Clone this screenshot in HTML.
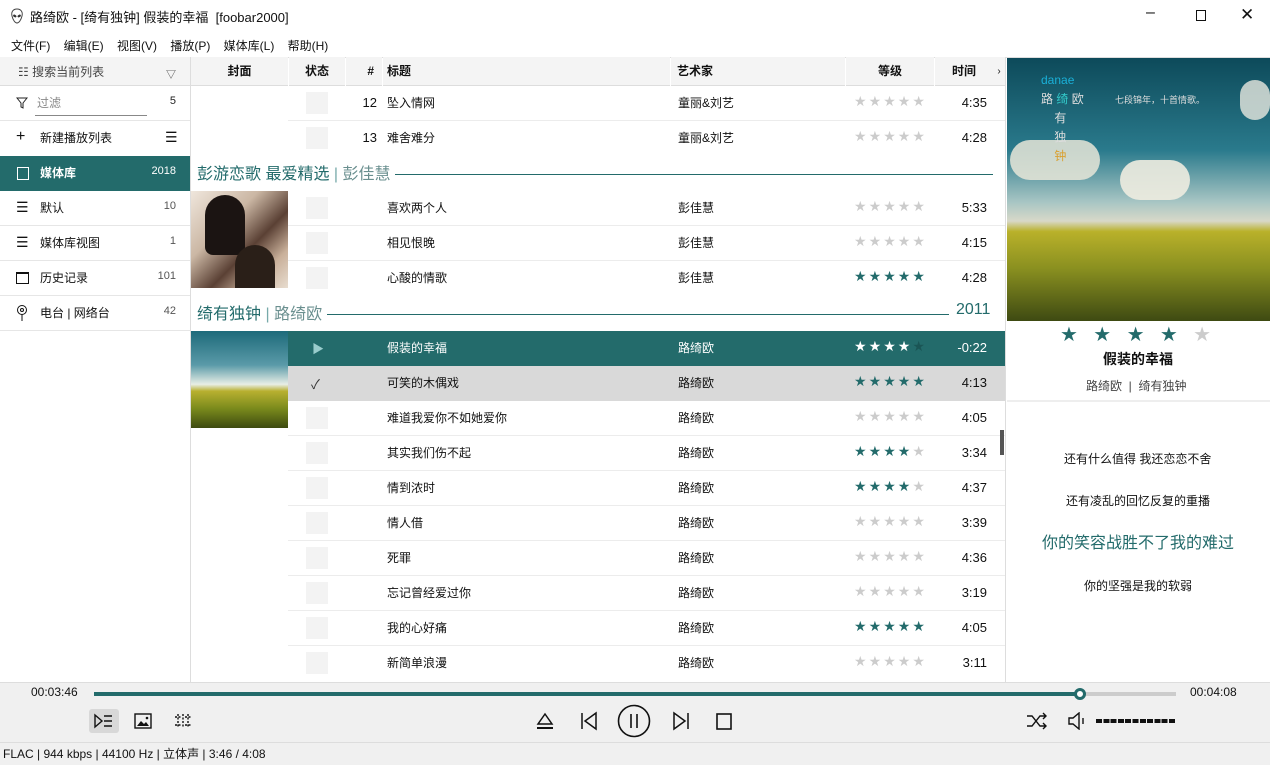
<!DOCTYPE html>
<html><head><meta charset="utf-8">
<style>
*{margin:0;padding:0;box-sizing:border-box}
body{width:1270px;height:765px;overflow:hidden;background:#fff;font-family:"Liberation Sans","Noto Sans CJK SC",sans-serif;font-size:12px;color:#111;position:relative}
.a{position:absolute}
.t{position:absolute;white-space:nowrap}
.row{position:absolute;left:288px;width:717px;height:35px;border-bottom:1px solid #ececec}
.sq{position:absolute;left:18px;top:6px;width:22px;height:22px;background:#f3f3f3}
.num{position:absolute;right:628px;top:9px;font-size:13px}
.ti{position:absolute;left:99px;top:8px}
.ar{position:absolute;left:390px;top:8px}
.st{position:absolute;left:565px;top:7px;font-size:14px;color:#ccc;letter-spacing:0}
.st span{display:inline-block;width:14.6px;text-align:center;font-family:"DejaVu Sans",sans-serif}
.g{color:#236b6b}
.tm{position:absolute;right:18px;top:9px;font-size:13px}
.side{position:absolute;left:0;width:190px;height:35px;border-bottom:1px solid #e6e6e6}
.side .l{position:absolute;left:40px;top:8px;font-size:12px}
.side .n{position:absolute;right:14px;top:9px;font-size:11px;color:#555}
.side .ic{position:absolute;left:16px;top:11px}
.hd{position:absolute;top:57px;height:29px;background:#f4f4f4;border-bottom:1px solid #ddd;font-weight:bold;font-size:12px;line-height:29px}
</style></head><body>
<div class="a" style="left:0;top:0;width:1270px;height:32px;background:#fff"></div>
<svg class="a" style="left:9px;top:8px" width="16" height="16" viewBox="0 0 16 16"><path d="M8 1C4 1 2 4 3 8c1 4 3 7 5 7s4-3 5-7c1-4-1-7-5-7z" fill="#fff" stroke="#444"/><ellipse cx="5.8" cy="8" rx="1.8" ry="1.2" fill="#333" transform="rotate(30 5.8 8)"/><ellipse cx="10.2" cy="8" rx="1.8" ry="1.2" fill="#333" transform="rotate(-30 10.2 8)"/></svg>
<div class="t" style="left:30px;top:7px;font-size:13px">路绮欧 - [绮有独钟] 假装的幸福 &nbsp;[foobar2000]</div>
<div class="t" style="left:1146px;top:4px;font-size:16px">–</div>
<div class="a" style="left:1196px;top:10px;width:10px;height:11px;border:1px solid #111"></div>
<div class="t" style="left:1240px;top:5px;font-size:17px;font-weight:300">✕</div>
<div class="t" style="left:11px;top:37px;font-size:12px;word-spacing:10px">文件(F) 编辑(E) 视图(V) 播放(P) 媒体库(L) 帮助(H)</div>
<div class="a" style="left:0;top:57px;width:1270px;height:1px;background:#ddd"></div>
<div class="a" style="left:0;top:57px;width:190px;height:29px;background:#f4f4f4;border-bottom:1px solid #ddd"></div>
<div class="t" style="left:18px;top:63px;font-size:12px;color:#444">☷ 搜索当前列表</div>
<div class="t" style="left:166px;top:66px;font-size:10px;color:#444">▽</div>
<div class="a" style="left:190px;top:57px;width:1px;height:625px;background:#ddd"></div>
<div class="side" style="top:86px"><svg class="ic" width="12" height="12" viewBox="0 0 12 12" style="top:11px"><path d="M1 1h10L7 6v5L5 10V6z" fill="none" stroke="#222"/></svg><span class="l" style="left:37px;top:8px;color:#888">过滤</span><div class="a" style="left:35px;top:29px;width:112px;height:1px;background:#888"></div><span class="n" style="color:#222">5</span></div>
<div class="side" style="top:121px;border:none"><span class="t" style="left:16px;top:7px;font-size:16px">+</span><span class="l">新建播放列表</span><span class="t" style="left:165px;top:8px;font-size:14px">☰</span></div>
<div class="side" style="top:156px;background:#236b6b;border:none"><div class="a" style="left:17px;top:11px;width:12px;height:13px;border:1px solid #fff"></div><span class="l" style="color:#fff;font-weight:bold">媒体库</span><span class="n" style="color:#fff">2018</span></div>
<div class="side" style="top:191px"><span class="t" style="left:16px;top:8px;font-size:14px">☰</span><span class="l">默认</span><span class="n">10</span></div>
<div class="side" style="top:226px"><span class="t" style="left:16px;top:8px;font-size:14px">☰</span><span class="l">媒体库视图</span><span class="n">1</span></div>
<div class="side" style="top:261px"><div class="a" style="left:16px;top:11px;width:13px;height:12px;border:1px solid #111;border-top-width:2px"></div><span class="l">历史记录</span><span class="n">101</span></div>
<div class="side" style="top:296px"><svg class="ic" width="12" height="16" viewBox="0 0 12 16" style="top:9px"><circle cx="6" cy="5" r="4.5" fill="none" stroke="#111"/><circle cx="6" cy="5" r="1.5" fill="none" stroke="#111"/><path d="M6 9.5V16" stroke="#111"/></svg><span class="l">电台 | 网络台</span><span class="n">42</span></div>
<div class="hd" style="left:191px;width:97px;text-align:center">封面</div>
<div class="hd" style="left:289px;width:56px;text-align:center">状态</div>
<div class="hd" style="left:346px;width:36px;text-align:right;padding-right:8px">#</div>
<div class="hd" style="left:383px;width:287px;padding-left:4px">标题</div>
<div class="hd" style="left:671px;width:174px;padding-left:6px">艺术家</div>
<div class="hd" style="left:846px;width:88px;text-align:center">等级</div>
<div class="hd" style="left:935px;width:58px;text-align:center">时间</div>
<div class="hd" style="left:993px;width:12px;font-weight:normal;font-size:10px;text-align:center">›</div>
<div class="row" style="top:86px"><div class="sq"></div><span class="num">12</span><span class="ti">坠入情网</span><span class="ar">童丽&amp;刘艺</span><span class="st"><span>★</span><span>★</span><span>★</span><span>★</span><span>★</span></span><span class="tm">4:35</span></div>
<div class="row" style="top:121px;border:none"><div class="sq"></div><span class="num">13</span><span class="ti">难舍难分</span><span class="ar">童丽&amp;刘艺</span><span class="st"><span>★</span><span>★</span><span>★</span><span>★</span><span>★</span></span><span class="tm">4:28</span></div>
<div class="t" style="left:197px;top:160px;font-size:16px;color:#236b6b">彭游恋歌 最爱精选 <span style="color:#7aa">|</span> <span style="color:#6a8f8f">彭佳慧</span></div>
<div class="a" style="left:395px;top:174px;width:598px;height:1px;background:#236b6b"></div>
<div class="a" style="left:191px;top:191px;width:97px;height:97px;background:linear-gradient(135deg,#efe6dc 0%,#cbb7a4 35%,#5a4034 60%,#c9b09a 80%,#e8ddd0 100%)"></div>
<div class="a" style="left:205px;top:195px;width:40px;height:60px;border-radius:20px 20px 8px 8px;background:#1b1412"></div>
<div class="a" style="left:235px;top:245px;width:40px;height:43px;border-radius:20px 20px 0 0;background:#2a1f18"></div>
<div class="row" style="top:191px"><div class="sq"></div><span class="ti">喜欢两个人</span><span class="ar">彭佳慧</span><span class="st"><span>★</span><span>★</span><span>★</span><span>★</span><span>★</span></span><span class="tm">5:33</span></div>
<div class="row" style="top:226px"><div class="sq"></div><span class="ti">相见恨晚</span><span class="ar">彭佳慧</span><span class="st"><span>★</span><span>★</span><span>★</span><span>★</span><span>★</span></span><span class="tm">4:15</span></div>
<div class="row" style="top:261px;border:none"><div class="sq"></div><span class="ti">心酸的情歌</span><span class="ar">彭佳慧</span><span class="st g"><span>★</span><span>★</span><span>★</span><span>★</span><span>★</span></span><span class="tm">4:28</span></div>
<div class="t" style="left:197px;top:300px;font-size:16px;color:#236b6b">绮有独钟 <span style="color:#7aa">|</span> <span style="color:#6a8f8f">路绮欧</span></div>
<div class="a" style="left:327px;top:314px;width:622px;height:1px;background:#236b6b"></div>
<div class="t" style="left:956px;top:301px;font-size:16px;color:#236b6b">2011</div>
<div class="a" style="left:191px;top:331px;width:97px;height:97px;background:linear-gradient(180deg,#1d6a7a 0%,#5a9aa8 35%,#e8eee6 55%,#b8b030 62%,#7a8a1c 80%,#3d4a10 100%)"></div>
<div class="row" style="top:331px;background:#236b6b;border:none;color:#fff"><span class="t" style="left:24px;top:9px;color:#9cc;font-size:12px">▶</span><span class="ti">假装的幸福</span><span class="ar">路绮欧</span><span class="st" style="color:#fff"><span>★</span><span>★</span><span>★</span><span>★</span><span style="color:#1a5555">★</span></span><span class="tm" style="color:#fff">-0:22</span></div>
<div class="row" style="top:366px;background:#d9d9d9;border:none"><span class="t" style="left:23px;top:8px;font-size:13px;color:#333">✓</span><span class="ti">可笑的木偶戏</span><span class="ar">路绮欧</span><span class="st g"><span>★</span><span>★</span><span>★</span><span>★</span><span>★</span></span><span class="tm">4:13</span></div>
<div class="row" style="top:401px"><div class="sq"></div><span class="ti">难道我爱你不如她爱你</span><span class="ar">路绮欧</span><span class="st"><span>★</span><span>★</span><span>★</span><span>★</span><span>★</span></span><span class="tm">4:05</span></div>
<div class="row" style="top:436px"><div class="sq"></div><span class="ti">其实我们伤不起</span><span class="ar">路绮欧</span><span class="st"><span class="g">★</span><span class="g">★</span><span class="g">★</span><span class="g">★</span><span>★</span></span><span class="tm">3:34</span></div>
<div class="row" style="top:471px"><div class="sq"></div><span class="ti">情到浓时</span><span class="ar">路绮欧</span><span class="st"><span class="g">★</span><span class="g">★</span><span class="g">★</span><span class="g">★</span><span>★</span></span><span class="tm">4:37</span></div>
<div class="row" style="top:506px"><div class="sq"></div><span class="ti">情人借</span><span class="ar">路绮欧</span><span class="st"><span>★</span><span>★</span><span>★</span><span>★</span><span>★</span></span><span class="tm">3:39</span></div>
<div class="row" style="top:541px"><div class="sq"></div><span class="ti">死罪</span><span class="ar">路绮欧</span><span class="st"><span>★</span><span>★</span><span>★</span><span>★</span><span>★</span></span><span class="tm">4:36</span></div>
<div class="row" style="top:576px"><div class="sq"></div><span class="ti">忘记曾经爱过你</span><span class="ar">路绮欧</span><span class="st"><span>★</span><span>★</span><span>★</span><span>★</span><span>★</span></span><span class="tm">3:19</span></div>
<div class="row" style="top:611px"><div class="sq"></div><span class="ti">我的心好痛</span><span class="ar">路绮欧</span><span class="st g"><span>★</span><span>★</span><span>★</span><span>★</span><span>★</span></span><span class="tm">4:05</span></div>
<div class="row" style="top:646px;border:none"><div class="sq"></div><span class="ti">新简单浪漫</span><span class="ar">路绮欧</span><span class="st"><span>★</span><span>★</span><span>★</span><span>★</span><span>★</span></span><span class="tm">3:11</span></div>
<div class="a" style="left:1000px;top:430px;width:4px;height:25px;background:#555"></div>
<div class="a" style="left:1005px;top:57px;width:1px;height:625px;background:#ddd"></div>
<div class="a" style="left:1007px;top:58px;width:263px;height:263px;background:linear-gradient(180deg,#0d4a5a 0%,#2a7a8c 35%,#a9c6c4 55%,#d8d8c8 62%,#b9b12a 66%,#8a9020 80%,#3e4a12 100%)"></div>
<div class="a" style="left:1010px;top:140px;width:90px;height:40px;border-radius:20px;background:#e8e6d8;opacity:.85"></div>
<div class="a" style="left:1120px;top:160px;width:70px;height:40px;border-radius:20px;background:#eeece0;opacity:.9"></div>
<div class="a" style="left:1240px;top:80px;width:30px;height:40px;border-radius:15px;background:#e8e8e0;opacity:.8"></div>
<div class="t" style="left:1041px;top:73px;color:#1ab0d8;font-size:12px">danae</div>
<div class="t" style="left:1041px;top:90px;color:#ddd;font-size:12px;line-height:19px">路 <span style="color:#3cc">绮</span> 欧<br>&nbsp;&nbsp;&nbsp;&nbsp;有<br>&nbsp;&nbsp;&nbsp;&nbsp;独<br>&nbsp;&nbsp;&nbsp;&nbsp;<span style="color:#d9a030">钟</span></div>
<div class="t" style="left:1115px;top:93px;color:#ddd;font-size:9px">七段锦年，十首情歌。</div>
<div class="t" style="left:1060px;top:322px;font-size:20px;color:#236b6b;font-family:'DejaVu Sans',sans-serif;word-spacing:9px">★ ★ ★ ★ <span style="color:#ccc">★</span></div>
<div class="t" style="left:1103px;top:349px;font-size:14px;font-weight:bold">假装的幸福</div>
<div class="t" style="left:1086px;top:377px;font-size:12px;color:#444">路绮欧 &nbsp;| &nbsp;绮有独钟</div>
<div class="a" style="left:1007px;top:400px;width:263px;height:2px;background:#eee"></div>
<div class="t" style="left:1064px;top:450px;font-size:12px">还有什么值得 我还恋恋不舍</div>
<div class="t" style="left:1066px;top:492px;font-size:12px">还有凌乱的回忆反复的重播</div>
<div class="t" style="left:1042px;top:529px;font-size:16px;color:#236b6b">你的笑容战胜不了我的难过</div>
<div class="t" style="left:1084px;top:577px;font-size:12px">你的坚强是我的软弱</div>
<div class="a" style="left:0;top:682px;width:1270px;height:83px;background:#f0f0f0;border-top:1px solid #ddd"></div>
<div class="t" style="left:31px;top:685px;font-size:12px">00:03:46</div>
<div class="t" style="left:1190px;top:685px;font-size:12px">00:04:08</div>
<div class="a" style="left:94px;top:692px;width:1082px;height:4px;background:#ccc"></div>
<div class="a" style="left:94px;top:692px;width:986px;height:4px;background:#236b6b"></div>
<div class="a" style="left:1074px;top:688px;width:12px;height:12px;border-radius:50%;background:#fff;border:3px solid #236b6b"></div>
<div class="a" style="left:89px;top:709px;width:30px;height:24px;background:#d8d8d8;border-radius:3px"></div>
<svg class="a" style="left:94px;top:713px" width="20" height="16" viewBox="0 0 20 16"><path d="M1 2l7 6-7 6z M10 3h8M10 8h8M10 13h8" fill="none" stroke="#111" stroke-width="1.4"/></svg>
<svg class="a" style="left:134px;top:713px" width="18" height="16" viewBox="0 0 18 16"><rect x="1" y="1" width="16" height="14" fill="none" stroke="#111" stroke-width="1.4"/><path d="M3 13l4-5 3 3 2-2 3 4z" fill="#111"/><circle cx="13" cy="5" r="1.3" fill="#111"/></svg>
<svg class="a" style="left:174px;top:713px" width="18" height="16" viewBox="0 0 18 16"><path d="M4 1v14M14 1v14M9 1v14M1 4h6M11 4h6M1 12h6M11 12h6" stroke="#111" stroke-width="1.4" stroke-dasharray="2 1.5"/></svg>
<svg class="a" style="left:535px;top:711px" width="20" height="20" viewBox="0 0 20 20"><path d="M10 3l7 10H3z" fill="none" stroke="#111" stroke-width="1.5"/><path d="M2 17h16" stroke="#111" stroke-width="2"/></svg>
<svg class="a" style="left:579px;top:711px" width="20" height="20" viewBox="0 0 20 20"><path d="M3 2v16M17 2L6 10l11 8z" fill="none" stroke="#111" stroke-width="1.5"/></svg>
<svg class="a" style="left:617px;top:704px" width="34" height="34" viewBox="0 0 34 34"><circle cx="17" cy="17" r="15.5" fill="none" stroke="#111" stroke-width="1.6"/><path d="M14 10v14M20 10v14" stroke="#111" stroke-width="1.6"/></svg>
<svg class="a" style="left:671px;top:711px" width="20" height="20" viewBox="0 0 20 20"><path d="M17 2v16M3 2l11 8-11 8z" fill="none" stroke="#111" stroke-width="1.5"/></svg>
<svg class="a" style="left:714px;top:711px" width="20" height="20" viewBox="0 0 20 20"><rect x="3" y="3" width="14" height="15" fill="none" stroke="#111" stroke-width="1.6"/></svg>
<svg class="a" style="left:1026px;top:712px" width="22" height="18" viewBox="0 0 22 18"><path d="M1 4h5l8 10h6M1 14h5l8-10h6M17 1l3 3-3 3M17 11l3 3-3 3" fill="none" stroke="#111" stroke-width="1.4"/></svg>
<svg class="a" style="left:1067px;top:712px" width="22" height="18" viewBox="0 0 22 18"><path d="M2 6h4l6-5v16l-6-5H2z" fill="none" stroke="#111" stroke-width="1.4"/><path d="M16 6v6" stroke="#111" stroke-width="1.4"/></svg>
<div class="a" style="left:1096px;top:719px;width:80px;height:4px;background:repeating-linear-gradient(90deg,#111 0 6px,transparent 6px 7.3px)"></div>
<div class="a" style="left:0;top:742px;width:1270px;height:1px;background:#ddd"></div>
<div class="t" style="left:3px;top:745px;font-size:12px">FLAC | 944 kbps | 44100 Hz | 立体声 | 3:46 / 4:08</div>
</body></html>
